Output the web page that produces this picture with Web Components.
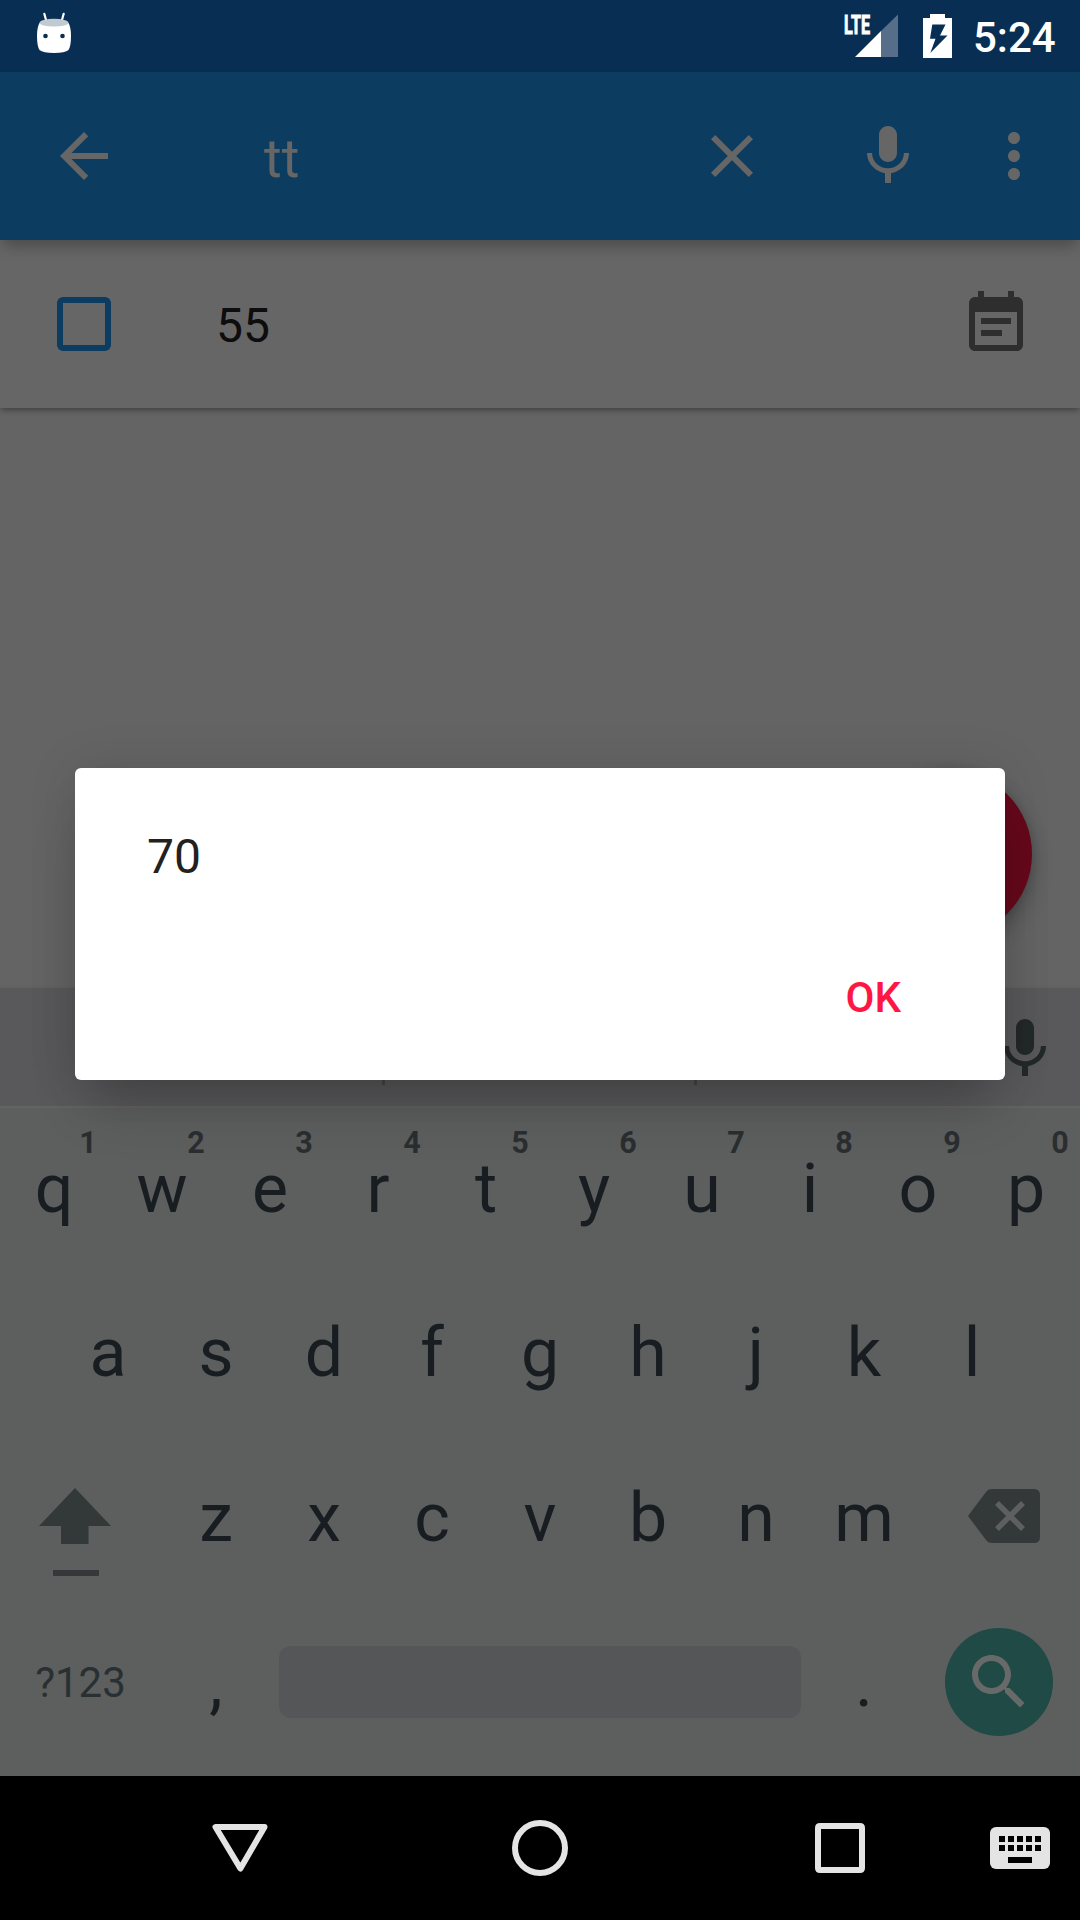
<!DOCTYPE html>
<html lang="en">
<head>
<meta charset="utf-8">
<title>Search</title>
<style>
html, body { margin: 0; padding: 0; }
body { width: 1080px; height: 1920px; overflow: hidden; background: #000; font-family: Roboto, "Liberation Sans", sans-serif; }
</style>
</head>
<body>
<phone-screen>
  <status-bar time="5:24"></status-bar>
  <search-bar query="tt"></search-bar>
  <list-area>
    <list-item>55</list-item>
    <action-button></action-button>
  </list-area>
  <soft-keyboard></soft-keyboard>
  <nav-bar></nav-bar>
  <alert-dialog slot="overlay" action="OK">70</alert-dialog>
</phone-screen>
<script>
function define(name, render) {
  customElements.define(name, class extends HTMLElement {
    connectedCallback() {
      if (this.shadowRoot) return;
      this.attachShadow({ mode: 'open' }).innerHTML = render(this);
    }
  });
}

const MIC = 'M12 14c1.66 0 2.99-1.34 2.99-3L15 5c0-1.66-1.34-3-3-3S9 3.34 9 5v6c0 1.66 1.34 3 3 3zm5.3-3c0 3-2.54 5.1-5.3 5.1S6.7 14 6.7 11H5c0 3.41 2.72 6.23 6 6.72V21h2v-3.28c3.28-.48 6-3.3 6-6.72h-1.7z';
const ICONS = {
  back: 'M20 11H7.83l5.59-5.59L12 4l-8 8 8 8 1.41-1.41L7.83 13H20v-2z',
  close: 'M19 6.41L17.59 5 12 10.59 6.41 5 5 6.41 10.59 12 5 17.59 6.41 19 12 13.41 17.59 19 19 17.59 13.41 12z',
  mic: MIC,
  more: 'M12 8c1.1 0 2-.9 2-2s-.9-2-2-2-2 .9-2 2 .9 2 2 2zm0 2c-1.1 0-2 .9-2 2s.9 2 2 2 2-.9 2-2-.9-2-2-2zm0 6c-1.1 0-2 .9-2 2s.9 2 2 2 2-.9 2-2-.9-2-2-2z',
  note: 'M17 10H7v2h10v-2zm2-7h-1V1h-2v2H8V1H6v2H5c-1.11 0-1.99.9-1.99 2L3 19c0 1.1.89 2 2 2h14c1.1 0 2-.9 2-2V5c0-1.1-.9-2-2-2zm0 16H5V8h14v11zm-5-5H7v2h7v-2z',
  search: 'M15.5 14h-.79l-.28-.27C15.41 12.59 16 11.11 16 9.5 16 5.91 13.09 3 9.5 3S3 5.91 3 9.5 5.91 16 9.5 16c1.61 0 3.09-.59 4.23-1.57l.27.28v.79l5 4.99L20.49 19l-4.99-5zm-6 0C7.01 14 5 11.99 5 9.5S7.01 5 9.5 5 14 7.01 14 9.5 11.99 14 9.5 14z'
};

define('md-icon', el => `
  <style>:host{display:block;flex:none;width:72px;height:72px} svg{display:block}</style>
  <svg width="72" height="72" viewBox="0 0 24 24" fill="currentColor"><path d="${ICONS[el.getAttribute('name')]}"/></svg>`);

define('phone-screen', () => `
  <style>:host{display:flex;flex-direction:column;position:relative;width:1080px;height:1920px;overflow:hidden}</style>
  <slot></slot><slot name="overlay"></slot>`);

define('status-bar', el => `
  <style>
    :host{display:flex;align-items:flex-start;height:72px;box-sizing:border-box;background:#092e53;color:#fff;padding:0 22px 0 30px}
    svg{display:block;flex:none}
    .gap{flex:1}
    .net{display:flex;width:57px;height:72px;position:relative}
    .lte{position:absolute;left:0;top:10px;font-size:26px;line-height:30px;font-weight:700;-webkit-text-stroke:1px #fff;transform:scaleX(.62);transform-origin:0 0}
    .battery{margin-left:22px}
    .time{margin-left:21px;width:85px;line-height:76px;font-size:42px;font-weight:500;white-space:nowrap}
  </style>
  <svg width="48" height="72" viewBox="30 0 48 72">
    <path d="M44.3 13.8L46.6 22M63.7 13.8L61.4 22" stroke="#fff" stroke-width="2.2" stroke-linecap="round"/>
    <path d="M39.5 23Q37 27 37 36Q37 46 39.5 50Q43 53 54 53Q65 53 68.500 50Q71 46 71 36Q71 27 68.500 23Z" fill="#fff"/>
    <ellipse cx="54" cy="22.700" rx="14.500" ry="3.900" fill="#c1c9d1"/>
    <circle cx="45.500" cy="36" r="2.300" fill="#092e53"/><circle cx="62.500" cy="36" r="2.300" fill="#092e53"/>
  </svg>
  <div class="gap"></div>
  <div class="net">
    <svg width="57" height="72" viewBox="844 0 57 72"><path d="M855 57L881 31V57Z" fill="#fff"/><path d="M881 31L898 14.500V57H881Z" fill="#566e89"/></svg>
    <span class="lte">LTE</span>
  </div>
  <svg class="battery" width="29" height="72" viewBox="923 0 29 72"><path fill="#fff" fill-rule="evenodd" d="M930 14H945V18H952V58H923V18H930ZM932.300 24.500L930 38.700H935.500L930.300 53L947.500 35.500H940L945.500 24.500Z"/></svg>
  <span class="time">${el.getAttribute('time')}</span>`);

define('search-bar', el => `
  <style>
    :host{display:flex;align-items:center;height:168px;box-sizing:border-box;position:relative;z-index:1;background:#0c3c60;color:#666;padding:0 30px 0 48px;box-shadow:0 9px 14px -3px rgba(0,0,0,.27)}
    .q{flex:1;margin-left:144px;font-size:54px;line-height:72px;padding-top:6px}
    .mic{margin:0 54px 0 84px}
  </style>
  <md-icon name="back"></md-icon><span class="q">${el.getAttribute('query')}</span>
  <md-icon name="close"></md-icon><md-icon class="mic" name="mic"></md-icon><md-icon name="more"></md-icon>`);

define('list-area', () => `
  <style>:host{display:block;position:relative;height:746px;background:#646464}</style><slot></slot>`);

define('list-item', () => `
  <style>
    :host{display:flex;align-items:center;height:168px;box-sizing:border-box;background:#666;padding:0 48px 0 57px;box-shadow:0 3px 6px -1px rgba(0,0,0,.38)}
    .box{width:54px;height:54px;box-sizing:border-box;border:6px solid #0c3c60;border-radius:6px}
    .t{flex:1;margin-left:105px;font-size:48px;line-height:60px;padding-top:3px;color:#0d0d0d}
    md-icon{color:#2e2e2e}
  </style>
  <span class="box"></span><span class="t"><slot></slot></span><md-icon name="note"></md-icon>`);

define('action-button', () => `
  <style>:host{display:block;position:absolute;right:48px;bottom:48px;width:168px;height:168px;border-radius:50%;background:#66091b;box-shadow:0 10px 20px rgba(0,0,0,.25),0 0 8px rgba(0,0,0,.12)}</style>`);

define('key-cap', el => `
  <style>
    :host{display:flex;flex:none;align-items:center;justify-content:center;position:relative;width:108px;height:100%;font-size:68px;line-height:80px;color:#171d20}
    .hint{position:absolute;left:58px;top:19px;width:60px;text-align:center;font-size:30.5px;line-height:32px;font-weight:700;color:#2b2e31}
  </style>
  <slot></slot>${el.hasAttribute('hint') ? `<span class="hint">${el.getAttribute('hint')}</span>` : ''}`);

const caps = s => [...s].map(c => `<key-cap>${c}</key-cap>`).join('');
define('soft-keyboard', () => `
  <style>
    :host{display:block;height:790px;background:#5d5f5e;overflow:hidden}
    .strip{display:flex;align-items:center;height:122px;box-sizing:border-box;background:#59595b;border-top:2px solid #616161;border-bottom:2px solid #626362;padding:4px 19px 0 382px}
    .strip i{width:3px;height:72px;background:#464648}
    .strip i+i{margin-left:309px}
    .strip md-icon{margin-left:auto;color:#232829}
    .row{display:flex;justify-content:center;height:165px;box-sizing:border-box}
    .r1{height:162px}
    svg{display:block;flex:none}
    .sym{display:flex;align-items:center;justify-content:center;width:162px;box-sizing:border-box;padding-right:1px;font-size:42px;color:#293033}
    .bar{width:522px;height:72px;margin:46px 9px 0;border-radius:12px;background:#555658}
    .go{display:flex;align-items:center;justify-content:center;width:108px;height:108px;margin:28px 27px 0;border-radius:50%;background:#204a46;color:#686a69}
  </style>
  <div class="strip"><i></i><i></i><md-icon name="mic"></md-icon></div>
  <div class="row r1">${[...'qwertyuiop'].map((c, i) => `<key-cap hint="${(i + 1) % 10}">${c}</key-cap>`).join('')}</div>
  <div class="row">${caps('asdfghjkl')}</div>
  <div class="row">
    <svg width="162" height="165" viewBox="0 1435 162 165"><path d="M75 1488L111 1526H88.500V1544H61V1526H39Z" fill="#333939"/><path d="M53 1570H99V1576H53Z" fill="#36363b"/></svg>
    ${caps('zxcvbnm')}
    <svg width="162" height="165" viewBox="918 1435 162 165"><path d="M992 1489H1034Q1040 1489 1040 1495V1537Q1040 1543 1034 1543H992Q988 1543 986 1540L968 1516L986 1492Q988 1489 992 1489Z" fill="#333939"/><path d="M997 1503L1023 1529M1023 1503L997 1529" stroke="#5e605f" stroke-width="5.500"/></svg>
  </div>
  <div class="row"><span class="sym">?123</span><key-cap>,</key-cap><span class="bar"></span><key-cap>.</key-cap><span class="go"><md-icon name="search"></md-icon></span></div>`);

define('nav-bar', () => `
  <style>:host{display:flex;align-items:center;height:144px;box-sizing:border-box;background:#000;padding:0 30px 0 212px} svg{display:block;flex:none}
  .home{margin-left:244px}.recent{margin-left:247px}.kb{margin-left:125px}</style>
  <svg width="56" height="56" viewBox="212 1820 56 56"><path d="M215.500 1827H264.500L240.400 1868.500Z" fill="none" stroke="#e4e4e4" stroke-width="6" stroke-linejoin="round"/></svg>
  <svg class="home" width="56" height="56"><circle cx="28" cy="28" r="25" fill="none" stroke="#e4e4e4" stroke-width="6"/></svg>
  <svg class="recent" width="50" height="50"><path fill="#e4e4e4" fill-rule="evenodd" d="M5 0H45Q50 0 50 5V45Q50 50 45 50H5Q0 50 0 45V5Q0 0 5 0ZM6 6V44H44V6Z"/></svg>
  <svg class="kb" width="60" height="42"><rect width="60" height="42" rx="6" fill="#e4e4e4"/><path fill="#000" d="${[9, 18].map(y => [9, 18, 27, 36, 45].map(x => `M${x} ${y}h6v6h-6z`).join('')).join('')}M18 30h24v6h-24z"/></svg>`);

define('alert-dialog', el => `
  <style>
    :host{display:flex;flex-direction:column;position:absolute;z-index:5;left:75px;top:768px;width:930px;height:312px;box-sizing:border-box;border-radius:6px;background:#fff;padding:57px 104px 36px 72px;box-shadow:0 0 50px rgba(0,0,0,.11),0 36px 54px -16px rgba(0,0,0,.24)}
    .m{font-size:48px;line-height:64px;color:#212121}
    .a{margin-top:auto;align-self:flex-end;font-size:42px;line-height:92px;font-weight:500;color:#ff1744}
  </style>
  <span class="m"><slot></slot></span><span class="a">${el.getAttribute('action')}</span>`);
</script>
</body>
</html>
